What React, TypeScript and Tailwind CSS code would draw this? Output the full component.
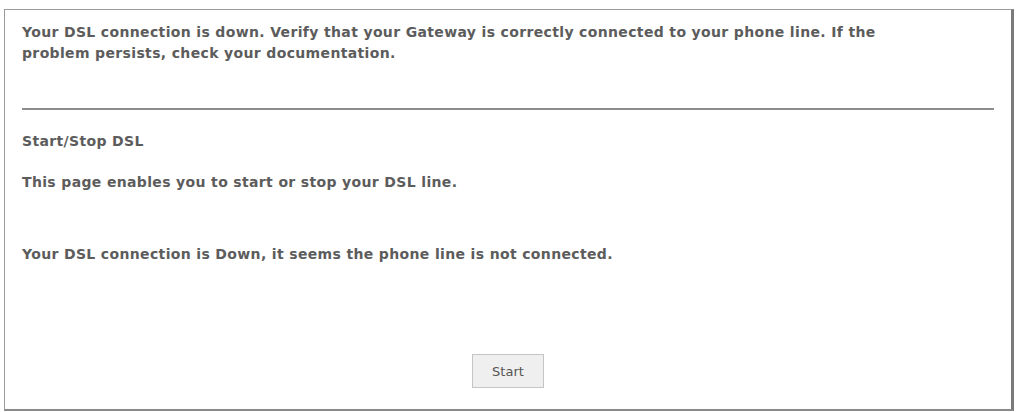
import React from 'react';

const textFont = { fontFamily: '"DejaVu Sans", Tahoma, Verdana, sans-serif' };

export default function App() {
  return (
    <div className="w-[1018px] h-[412px] bg-white pl-[4px] pt-[9px]" style={textFont}>
      <div className="w-[1010px] h-[402px] border border-[#9a9a9a] border-r-[3px] border-r-[#7a7a7a] border-b-[2px] border-b-[#8a8a8a] pl-[17px] pr-[17px] pt-[12px] text-[14px] tracking-[0.35px] leading-[21px] font-bold text-[#5c5c5c]">
        <p>
          Your DSL connection is down. Verify that your Gateway is correctly connected to your phone line. If the
          <br />
          problem persists, check your documentation.
        </p>
        <hr className="mt-[44px] border-0 h-[2px] bg-[#8c8c8c]" />
        <h2 className="mt-[21px]">Start/Stop DSL</h2>
        <p className="mt-[20px]">This page enables you to start or stop your DSL line.</p>
        <p className="mt-[51px]">Your DSL connection is Down, it seems the phone line is not connected.</p>
        <div className="mt-[89px] flex justify-center">
          <button
            type="button"
            className="w-[72px] h-[34px] bg-[#efefef] border border-[#c4c4c4] text-[13px] tracking-normal font-normal text-[#555]"
          >
            Start
          </button>
        </div>
      </div>
    </div>
  );
}
